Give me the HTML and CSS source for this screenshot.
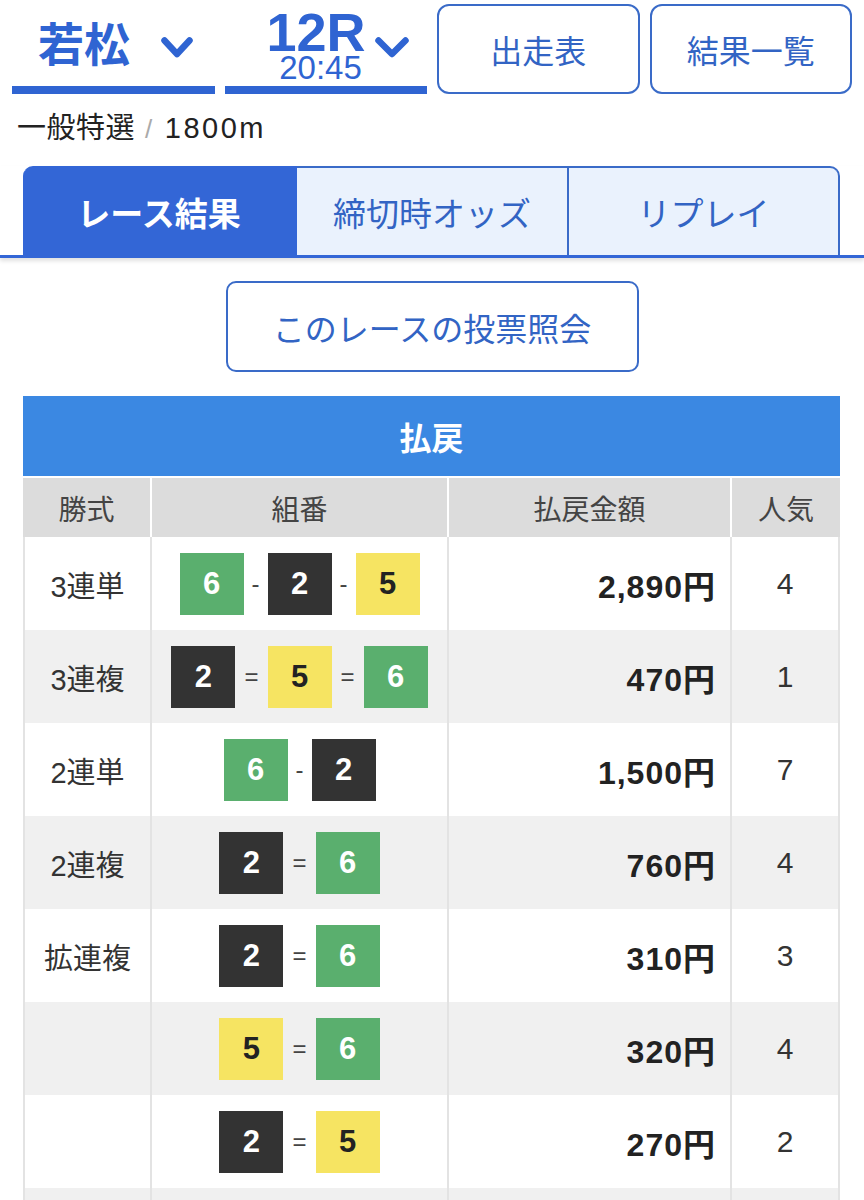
FILE: index.html
```html
<!DOCTYPE html>
<html lang="ja">
<head>
<meta charset="utf-8">
<title>若松 12R 結果</title>
<link rel="stylesheet" href="styles.css">
</head>
<body>
<header class="head">
  <div class="sel sel-venue">
    <span class="venue">若松</span>
    <svg class="chev" width="32" height="21" viewBox="0 0 32 21"><polyline points="3.5,3.5 16,17 28.5,3.5" fill="none" stroke="#2f64d2" stroke-width="6.5" stroke-linecap="round" stroke-linejoin="round"/></svg>
  </div>
  <div class="sel sel-race">
    <div class="race-col">
      <span class="race">12R</span>
      <span class="time">20:45</span>
    </div>
    <svg class="chev" width="34" height="21" viewBox="0 0 34 21"><polyline points="3.5,3.5 17,17 30.5,3.5" fill="none" stroke="#2f64d2" stroke-width="6.5" stroke-linecap="round" stroke-linejoin="round"/></svg>
  </div>
  <a class="hbtn">出走表</a>
  <a class="hbtn">結果一覧</a>
</header>

<div class="sub">一般特選<span class="slash">/</span><span class="dist">1800m</span></div>

<nav class="tabbar">
  <div class="tabs">
    <div class="tab active">レース結果</div>
    <div class="tab">締切時オッズ</div>
    <div class="tab">リプレイ</div>
  </div>
</nav>

<div class="vote-wrap"><a class="vote">このレースの投票照会</a></div>

<section class="pay">
  <div class="pay-title">払戻</div>
  <div class="prow phead">
    <div class="c c1">勝式</div>
    <div class="c c2">組番</div>
    <div class="c c3">払戻金額</div>
    <div class="c c4">人気</div>
  </div>
  <div class="rows">
    <div class="prow">
      <div class="c c1">3連単</div>
      <div class="c c2"><span class="b g">6</span><span class="sep">-</span><span class="b k">2</span><span class="sep">-</span><span class="b y">5</span></div>
      <div class="c c3">2,890円</div>
      <div class="c c4">4</div>
    </div>
    <div class="prow">
      <div class="c c1">3連複</div>
      <div class="c c2"><span class="b k">2</span><span class="sep eq">=</span><span class="b y">5</span><span class="sep eq">=</span><span class="b g">6</span></div>
      <div class="c c3">470円</div>
      <div class="c c4">1</div>
    </div>
    <div class="prow">
      <div class="c c1">2連単</div>
      <div class="c c2"><span class="b g">6</span><span class="sep">-</span><span class="b k">2</span></div>
      <div class="c c3">1,500円</div>
      <div class="c c4">7</div>
    </div>
    <div class="prow">
      <div class="c c1">2連複</div>
      <div class="c c2"><span class="b k">2</span><span class="sep eq">=</span><span class="b g">6</span></div>
      <div class="c c3">760円</div>
      <div class="c c4">4</div>
    </div>
    <div class="prow">
      <div class="c c1">拡連複</div>
      <div class="c c2"><span class="b k">2</span><span class="sep eq">=</span><span class="b g">6</span></div>
      <div class="c c3">310円</div>
      <div class="c c4">3</div>
    </div>
    <div class="prow">
      <div class="c c1"></div>
      <div class="c c2"><span class="b y">5</span><span class="sep eq">=</span><span class="b g">6</span></div>
      <div class="c c3">320円</div>
      <div class="c c4">4</div>
    </div>
    <div class="prow">
      <div class="c c1"></div>
      <div class="c c2"><span class="b k">2</span><span class="sep eq">=</span><span class="b y">5</span></div>
      <div class="c c3">270円</div>
      <div class="c c4">2</div>
    </div>
    <div class="prow">
      <div class="c c1"></div>
      <div class="c c2"></div>
      <div class="c c3"></div>
      <div class="c c4"></div>
    </div>
  </div>
</section>
</body>
</html>
```

FILE: styles.css
```css
* { box-sizing: border-box; }
html, body { margin: 0; padding: 0; background: #fff; }
body {
  width: 864px;
  font-family: "Liberation Sans", "Noto Sans CJK JP", sans-serif;
  color: #222;
}

.head {
  display: grid;
  grid-template-columns: repeat(4, 1fr);
  gap: 10px;
  padding: 4px 12px 0;
}
.sel {
  height: 90px;
  border-bottom: 8px solid #2f64d2;
  display: flex;
  align-items: center;
  color: #2f64d2;
}
.sel-venue { padding-left: 26px; }
.venue {
  font-size: 46px;
  font-weight: bold;
  line-height: 50px;
}
.sel-venue .chev { margin-left: 31px; margin-top: 5px; }
.sel-race { padding-left: 42px; }
.race-col {
  display: flex;
  flex-direction: column;
  align-items: center;
  margin-top: -2px;
}
.race {
  font-size: 54px;
  font-weight: bold;
  line-height: 48px;
}
.time {
  font-size: 33px;
  line-height: 24px;
  padding-left: 9px;
}
.sel-race .chev { margin-left: 9px; margin-top: 5px; }

.hbtn {
  height: 90px;
  border: 2px solid #3a6bc8;
  border-radius: 12px;
  display: flex;
  align-items: center;
  justify-content: center;
  font-size: 32px;
  color: #3264c4;
}

.sub {
  margin-top: 16px;
  padding-left: 17px;
  font-size: 29px;
  line-height: 36px;
  letter-spacing: 0.5px;
  color: #222;
}
.slash { color: #aaa; margin: 0 12px 0 10px; font-size: 26px; }
.dist { letter-spacing: 2.5px; }

.tabbar {
  margin-top: 19px;
  border-bottom: 3px solid #3366d6;
  box-shadow: 0 3px 4px rgba(0, 0, 0, 0.12);
}
.tabs {
  display: grid;
  grid-template-columns: 274px 272px 271px;
  margin-left: 23px;
  width: 817px;
  height: 89px;
}
.tab {
  display: flex;
  align-items: center;
  justify-content: center;
  background: #eaf2fd;
  border: 2px solid #3a6bc8;
  border-bottom: 0;
  border-left: 0;
  font-size: 33px;
  color: #3264c4;
}
.tab:first-child { border-radius: 10px 0 0 0; }
.tab:last-child { border-radius: 0 10px 0 0; }
.tab.active {
  background: #3366d6;
  border-color: #3366d6;
  color: #fff;
  font-weight: bold;
}

.vote-wrap {
  display: flex;
  justify-content: center;
  margin-top: 23px;
}
.vote {
  width: 413px;
  height: 91px;
  border: 2px solid #3a6bc8;
  border-radius: 10px;
  display: flex;
  align-items: center;
  justify-content: center;
  font-size: 32px;
  color: #3264c4;
}

.pay {
  margin: 24px 0 0 23px;
  width: 817px;
}
.pay-title {
  height: 80px;
  background: #3b88e2;
  color: #fff;
  font-size: 32px;
  font-weight: bold;
  display: flex;
  align-items: center;
  justify-content: center;
}
.prow {
  display: grid;
  grid-template-columns: 127px 297px 283px 110px;
  height: 93px;
}
.phead {
  margin-top: 2px;
  height: 59px;
}
.c {
  display: flex;
  align-items: center;
  justify-content: center;
  font-size: 29px;
  color: #333;
  border-left: 2px solid #e3e3e3;
}
.c4 { border-right: 2px solid #e3e3e3; }
.phead .c {
  background: #dcdcdc;
  border-left: 2px solid #fff;
  border-right: 0;
  color: #444;
  font-size: 28px;
}
.phead .c1 { border-left: 0; }
.rows .prow:nth-child(even) { background: #f0f0f0; }
.rows .c3 {
  justify-content: flex-end;
  padding-right: 14px;
  font-size: 32px;
  font-weight: bold;
  letter-spacing: 1px;
  color: #222;
}
.rows .c4 { font-size: 30px; }

.b {
  width: 64px;
  height: 62px;
  display: inline-flex;
  align-items: center;
  justify-content: center;
  font-size: 31px;
  font-weight: bold;
}
.b.g { background: #5aaf6e; color: #fff; }
.b.k { background: #333; color: #fff; }
.b.y { background: #f6e462; color: #222; }
.sep {
  font-size: 24px;
  color: #444;
  margin: 0 8px;
}
.sep.eq { margin: 0 9px; }
```
